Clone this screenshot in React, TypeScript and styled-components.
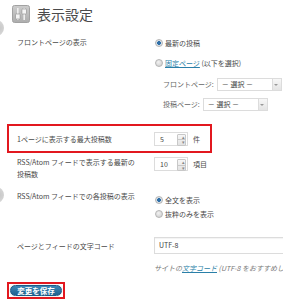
import styled, { createGlobalStyle } from 'styled-components'

const GlobalStyle = createGlobalStyle`
	html, body {
		margin: 0;
		padding: 0;
		background: #fff;
	}
	body {
		font-family: 'Noto Sans CJK JP', 'Noto Sans', sans-serif;
		color: #444;
	}
`

const FONT = `'Noto Sans CJK JP', 'Noto Sans', sans-serif`
const RED = '#e2181f'
const LINK = '#2a7fa8'

function SettingsIcon() {
	return (
		<svg width="18" height="18" viewBox="0 0 18 18">
			<defs>
				<linearGradient id="ig" x1="0" y1="0" x2="0" y2="1">
					<stop offset="0" stopColor="#cdcdcd" />
					<stop offset="1" stopColor="#adadad" />
				</linearGradient>
			</defs>
			<rect x="0.5" y="0.5" width="17" height="17" rx="2" fill="url(#ig)" stroke="#a2a2a2" />
			<rect x="5" y="3" width="1.6" height="12" fill="#eee" />
			<rect x="3.5" y="9" width="4.6" height="5" rx="0.6" fill="#f4f4f4" stroke="#8a8a8a" strokeWidth="0.6" />
			<rect x="11.4" y="3" width="1.6" height="12" fill="#eee" />
			<rect x="9.9" y="4" width="4.6" height="5" rx="0.6" fill="#f4f4f4" stroke="#8a8a8a" strokeWidth="0.6" />
		</svg>
	)
}

export default function App() {
	return (
		<Page>
			<GlobalStyle />
			<Header>
				<SettingsIcon />
				<Title>表示設定</Title>
			</Header>

			<Row $top={13}>
				<Label>フロントページの表示</Label>
				<Field>
					<RadioLine>
						<Radio $checked />
						<span>最新の投稿</span>
					</RadioLine>
					<RadioLine $top={6}>
						<Radio />
						<span>
							<Link>固定ページ</Link> (以下を選択)
						</span>
					</RadioLine>
					<SubRow $top={7}>
						<span>フロントページ:</span>
						<Select>－ 選択 －</Select>
					</SubRow>
					<SubRow $top={6}>
						<span>投稿ページ:</span>
						<Select>－ 選択 －</Select>
					</SubRow>
				</Field>
			</Row>

			<Highlight>
				<Label>1ページに表示する最大投稿数</Label>
				<Field>
					<Inline>
						<Spinner>5</Spinner>
						<span>件</span>
					</Inline>
				</Field>
			</Highlight>

			<Row $top={3}>
				<Label>
					RSS/Atom フィードで表示する最新の
					<br />
					投稿数
				</Label>
				<Field $pad={1}>
					<Inline>
						<Spinner>10</Spinner>
						<span>項目</span>
					</Inline>
				</Field>
			</Row>

			<Row $top={10}>
				<Label>RSS/Atom フィードでの各投稿の表示</Label>
				<Field $pad={3}>
					<RadioLine>
						<Radio $checked />
						<span>全文を表示</span>
					</RadioLine>
					<RadioLine>
						<Radio />
						<span>抜粋のみを表示</span>
					</RadioLine>
				</Field>
			</Row>

			<Row $top={16}>
				<Label $pad={3}>ページとフィードの文字コード</Label>
				<Field>
					<TextInput>UTF-8</TextInput>
					<Description>
						サイトの<Link>文字コード</Link> (UTF-8 をおすすめし
					</Description>
				</Field>
			</Row>

			<SubmitFrame>
				<SaveButton>変更を保存</SaveButton>
			</SubmitFrame>
		</Page>
	)
}

const Page = styled.div`
	position: relative;
	width: 283px;
	height: 300px;
	overflow: hidden;
	padding-top: 5px;
	box-sizing: border-box;
	font-family: ${FONT};
	font-size: 7px;
	line-height: 12px;
	&::before,
	&::after {
		content: '';
		position: absolute;
		left: -12px;
		width: 16px;
		height: 16px;
		border-radius: 50%;
		background: radial-gradient(circle at 70% 50%, #c8c8c8, #e6e6e6);
	}
	&::before {
		top: 20px;
	}
	&::after {
		top: 187px;
	}
`

const Header = styled.header`
	display: flex;
	align-items: center;
	gap: 7px;
	height: 18px;
	padding-left: 12px;
`

const Title = styled.h2`
	margin: 0;
	font-size: 14px;
	font-weight: normal;
	line-height: 18px;
	color: #4a4a4a;
`

const Row = styled.div<{ $top?: number }>`
	display: grid;
	grid-template-columns: 137px 1fr;
	margin-top: ${({ $top }) => $top ?? 0}px;
	padding-left: 17px;
`

const Highlight = styled.div`
	display: grid;
	grid-template-columns: 137px 1fr;
	align-items: center;
	margin: 13px 0 0 7px;
	width: 205px;
	height: 29px;
	box-sizing: border-box;
	border: 2px solid ${RED};
	padding-left: 8px;
`

const Label = styled.div<{ $pad?: number }>`
	padding-top: ${({ $pad }) => $pad ?? 0}px;
	color: #4a4a4a;
	white-space: nowrap;
`

const Field = styled.div<{ $pad?: number }>`
	display: flex;
	flex-direction: column;
	padding-top: ${({ $pad }) => $pad ?? 0}px;
	min-width: 0;
`

const RadioLine = styled.label<{ $top?: number }>`
	display: flex;
	align-items: center;
	gap: 2px;
	height: 14px;
	margin-top: ${({ $top }) => $top ?? 0}px;
	margin-left: 1px;
	white-space: nowrap;
	color: #4a4a4a;
`

const Radio = styled.span<{ $checked?: boolean }>`
	display: inline-block;
	width: 6px;
	height: 6px;
	border-radius: 50%;
	border: 1px solid #b5b5b5;
	background: ${({ $checked }) =>
		$checked
			? 'radial-gradient(circle, #2f6fa8 0 1.6px, #dfe6ec 2.2px, #cfd5da 100%)'
			: 'radial-gradient(circle at 40% 35%, #f2f2f2, #c9c9c9)'};
`

const Link = styled.span`
	color: ${LINK};
	text-decoration: underline;
`

const SubRow = styled.div<{ $top?: number }>`
	display: flex;
	align-items: center;
	gap: 3px;
	height: 14px;
	margin-top: ${({ $top }) => $top ?? 0}px;
	padding-left: 9px;
	white-space: nowrap;
	color: #666;
`

const Select = styled.div`
	position: relative;
	width: 65px;
	height: 13px;
	box-sizing: border-box;
	border: 1px solid #dcdcdc;
	padding-left: 4px;
	line-height: 11px;
	color: #444;
	background: #fff;
	&::after {
		content: '';
		position: absolute;
		right: 0;
		top: 0;
		width: 8px;
		height: 11px;
		border-left: 1px solid #dcdcdc;
		background: linear-gradient(#f7f7f7, #e4e4e4);
	}
	&::before {
		content: '';
		position: absolute;
		right: 2.5px;
		top: 5px;
		z-index: 1;
		border-left: 2px solid transparent;
		border-right: 2px solid transparent;
		border-top: 2px solid #999;
	}
`

const Inline = styled.div`
	display: flex;
	align-items: center;
	gap: 5px;
	white-space: nowrap;
	color: #4a4a4a;
`

const Spinner = styled.div`
	position: relative;
	width: 34px;
	height: 14px;
	box-sizing: border-box;
	border: 1px solid #dcdcdc;
	padding-left: 5px;
	line-height: 12px;
	color: #444;
	&::after {
		content: '';
		position: absolute;
		right: 1px;
		top: 1px;
		width: 7px;
		height: 10px;
		border: 1px solid #c8c8c8;
		border-radius: 1px;
		background:
			linear-gradient(#c8c8c8, #c8c8c8) center / 100% 1px no-repeat,
			linear-gradient(#f6f6f6, #e2e2e2);
	}
	&::before {
		content: '▴\\A▾';
		white-space: pre;
		position: absolute;
		right: 2px;
		top: 1px;
		z-index: 1;
		font-size: 5px;
		line-height: 5.5px;
		color: #888;
	}
`

const TextInput = styled.div`
	width: 140px;
	height: 17px;
	box-sizing: border-box;
	border: 1px solid #dcdcdc;
	border-right: none;
	padding-left: 4px;
	line-height: 15px;
	color: #444;
	box-shadow: inset 0 1px 1px rgba(0, 0, 0, 0.05);
`

const Description = styled.p`
	margin: 8px 0 0;
	font-style: italic;
	color: #777;
	white-space: nowrap;
`

const SubmitFrame = styled.div`
	display: inline-flex;
	margin: 8px 0 0 7px;
	padding: 1px;
	border: 2px solid ${RED};
`

const SaveButton = styled.button`
	width: 52px;
	height: 11px;
	padding: 0;
	border: 1px solid #1d5a86;
	border-radius: 6px;
	background: linear-gradient(#3c87b8, #20628f);
	color: #fff;
	font-family: ${FONT};
	font-size: 7.5px;
	font-weight: bold;
	line-height: 9px;
	text-align: center;
	box-shadow: 0 0 1px rgba(0, 0, 0, 0.4);
`
